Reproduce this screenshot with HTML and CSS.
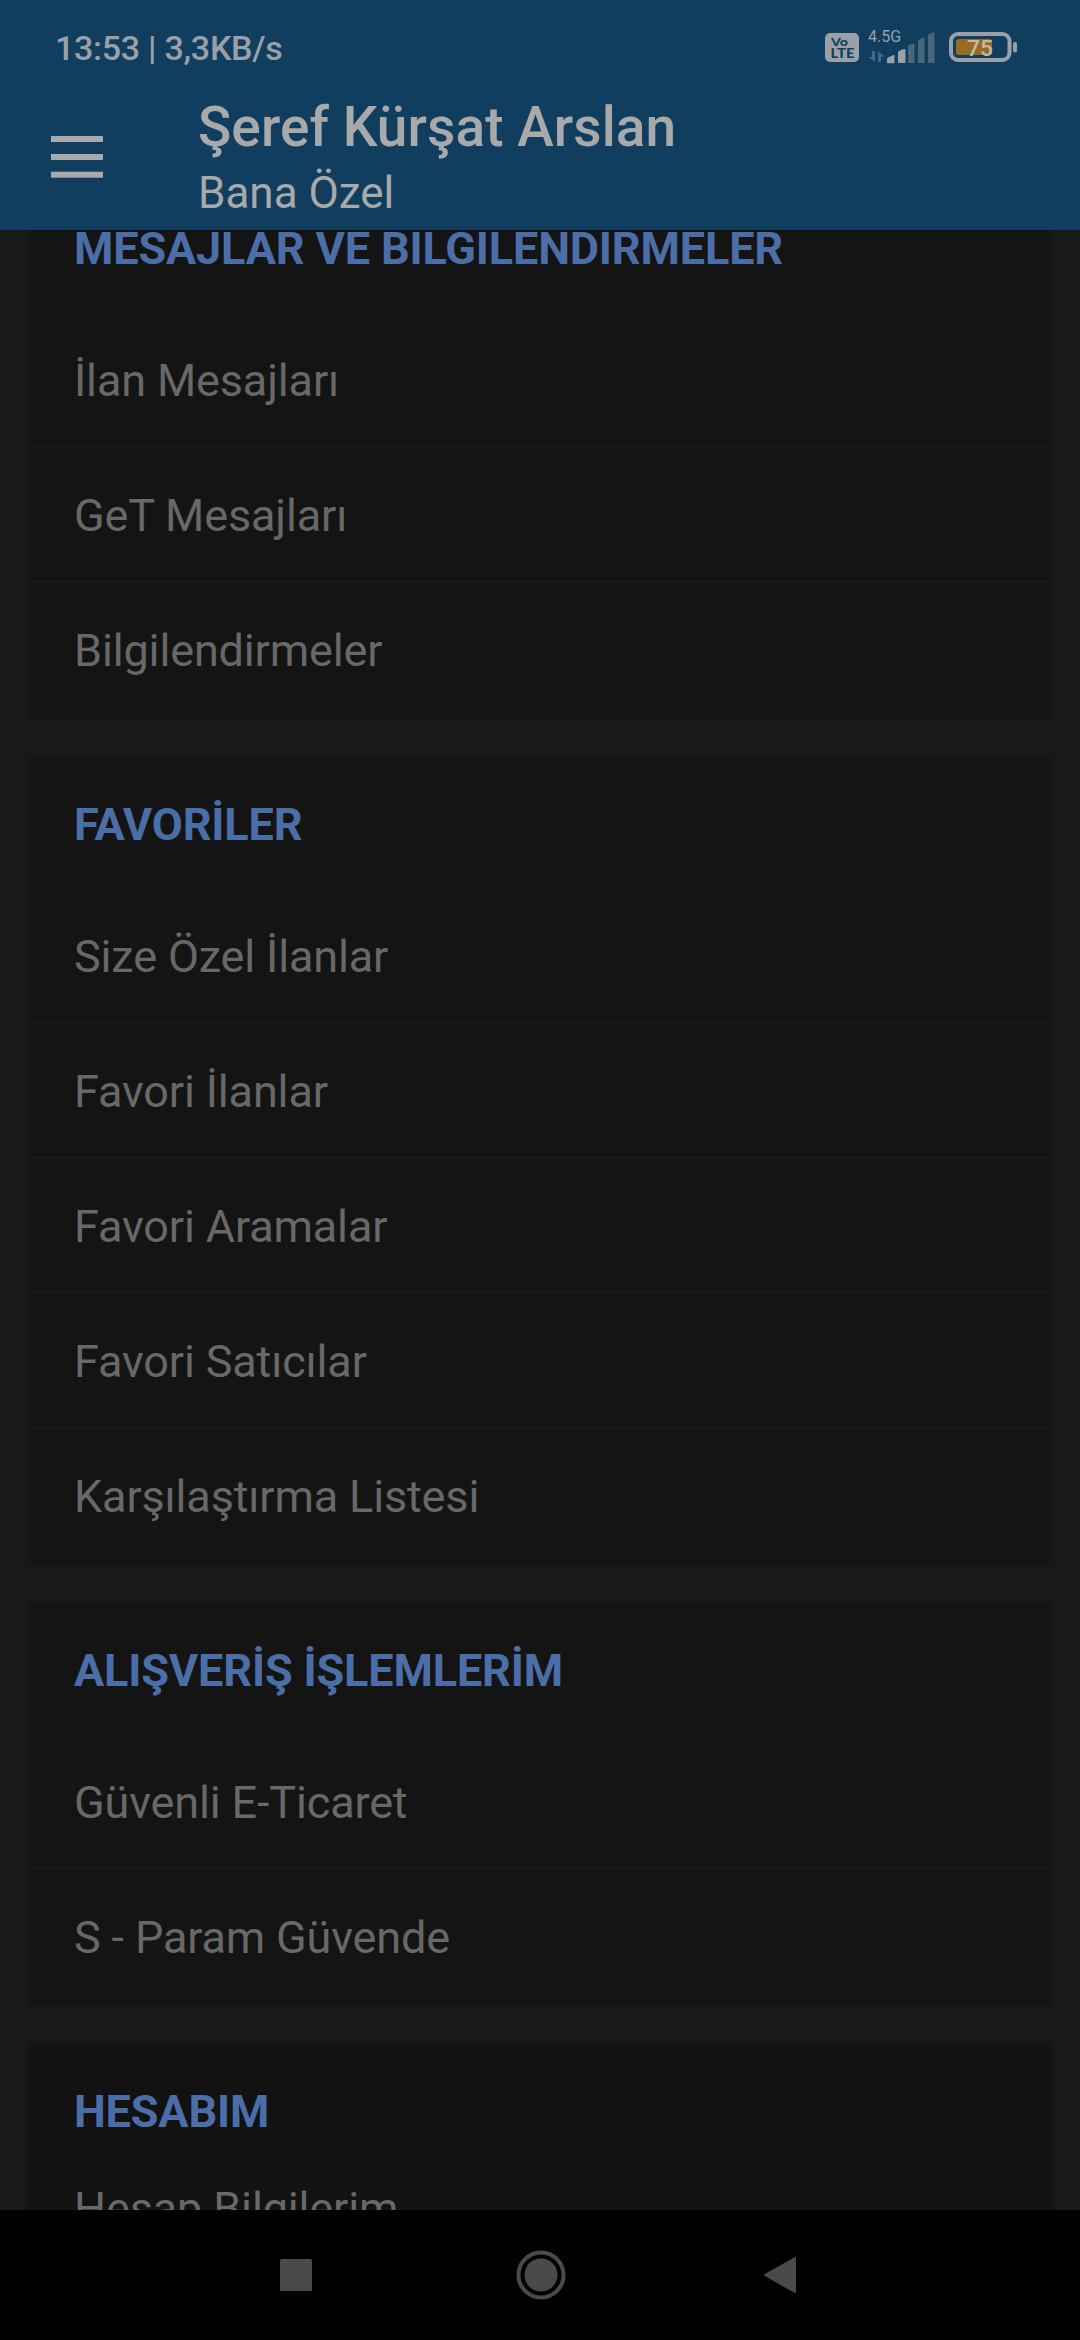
FILE: index.html
```html
<!DOCTYPE html>
<html lang="tr">
<head>
<meta charset="utf-8">
<title>Bana Özel</title>
<link rel="stylesheet" href="styles.css">
</head>
<body>
<div class="screen">
  <header class="header">
    <div class="status">
      <span class="clock">13:53 | 3,3KB/s</span>
      <svg class="status-icons" width="196" height="40" viewBox="824 28 196 40">
        <rect x="825" y="33" width="34" height="29" rx="5" fill="#9aa0a8"/>
        <text class="volte" x="831" y="45.7" font-size="11.5" textLength="17" lengthAdjust="spacingAndGlyphs">Vo</text>
        <text class="volte" x="830.5" y="58.3" font-size="13.5" textLength="24" lengthAdjust="spacingAndGlyphs">LTE</text>
        <text class="network" x="868" y="42" textLength="33" lengthAdjust="spacingAndGlyphs">4.5G</text>
        <path d="M872 51h3v11l-6.500-5h3.500zM878 62h3v-5.500h3.500L878 51z" fill="#48677f"/>
        <g fill="#9aa0a8">
          <path d="M887 63v-4q0-1 1-1.600l5.500-2.400h1v8q-4 .5-7.500 0z"/>
          <path d="M898 63V53q0-1.500 1-2l5-2q1.500 0 1.500 1v13z"/>
        </g>
        <g fill="#48677f">
          <path d="M908 63V47q0-1.500 1-2l4.500-1.500q1 0 1 1V63z"/>
          <path d="M918 63V42q0-2 1-2.500l4.500-1.800q1 0 1 1V63z"/>
          <path d="M928 63V36q0-1.500 1-2l4.500-1.700q1 0 1 1V63z"/>
        </g>
        <rect x="951" y="34" width="58.500" height="26" rx="7" fill="none" stroke="#9aa0a8" stroke-width="4"/>
        <rect x="956" y="39" width="36" height="16" rx="3" fill="#986c20"/>
        <rect x="1013" y="42" width="4" height="10.500" rx="2" fill="#9aa0a8"/>
        <text class="charge" x="967" y="55.500" textLength="26" lengthAdjust="spacingAndGlyphs">75</text>
      </svg>
    </div>
    <div class="toolbar">
      <svg class="menu" width="52" height="42" viewBox="0 0 52 42" fill="#a8a9aa">
        <rect width="52" height="6"/><rect y="18" width="52" height="6"/><rect y="35.700" width="52" height="6"/>
      </svg>
      <div class="titles">
        <h1 class="title">Şeref Kürşat Arslan</h1>
        <p class="subtitle">Bana Özel</p>
      </div>
    </div>
  </header>
  <main class="content">
    <section class="card first">
      <h2 class="heading">MESAJLAR VE BILGILENDIRMELER</h2>
      <div class="row">İlan Mesajları</div>
      <div class="row">GeT Mesajları</div>
      <div class="row">Bilgilendirmeler</div>
    </section>
    <section class="card">
      <h2 class="heading">FAVORİLER</h2>
      <div class="row">Size Özel İlanlar</div>
      <div class="row">Favori İlanlar</div>
      <div class="row">Favori Aramalar</div>
      <div class="row">Favori Satıcılar</div>
      <div class="row">Karşılaştırma Listesi</div>
    </section>
    <section class="card">
      <h2 class="heading">ALIŞVERİŞ İŞLEMLERİM</h2>
      <div class="row">Güvenli E-Ticaret</div>
      <div class="row">S - Param Güvende</div>
    </section>
    <section class="card account">
      <h2 class="heading">HESABIM</h2>
      <div class="row">Hesap Bilgilerim</div>
    </section>
  </main>
  <nav class="navbar">
    <svg width="32" height="32" viewBox="0 0 32 32"><rect width="32" height="32" rx="1.500" fill="#4a4a4a"/></svg>
    <svg class="home" width="50" height="50" viewBox="0 0 50 50"><circle cx="25" cy="25" r="22.500" fill="none" stroke="#4a4a4a" stroke-width="4"/><circle cx="25" cy="25" r="16.500" fill="#4a4a4a"/></svg>
    <svg width="32" height="38" viewBox="0 0 32 38"><path d="M1 19L31 2v34z" fill="#4a4a4a" stroke="#4a4a4a" stroke-width="2" stroke-linejoin="round"/></svg>
  </nav>
</div>
</body>
</html>
```

FILE: styles.css
```css
* { box-sizing: border-box; margin: 0; }
body { background: #191919; font-family: Roboto, sans-serif; }
.screen {
  width: 1080px;
  height: 2340px;
  display: flex;
  flex-direction: column;
  overflow: hidden;
}
.header { height: 230px; flex: none; background: #113e5e; color: #a8a9aa; }
.status {
  height: 95px;
  padding: 1px 60px 0 55px;
  display: flex;
  align-items: center;
  justify-content: space-between;
}
.clock { font-size: 34px; font-weight: 500; line-height: 40px; letter-spacing: -0.27px; color: #9aa0a8; }
.volte { font-family: Lato, sans-serif; font-weight: 900; fill: #113e5e; }
.network { font-size: 16px; fill: #9aa0a8; }
.charge { font-size: 22px; font-weight: 500; fill: #c2b9a6; }
.toolbar { display: flex; align-items: flex-start; padding-left: 51px; }
.menu { margin-top: 41px; flex: none; }
.titles { margin-left: 95px; white-space: nowrap; }
.title { font-size: 55px; font-weight: 500; line-height: 64px; letter-spacing: 0.07px; }
.subtitle { font-size: 44px; line-height: 52px; margin-top: 8px; }
.content {
  flex: 1;
  min-height: 0;
  overflow: hidden;
  padding: 0 29px;
  display: flex;
  flex-direction: column;
  gap: 38px;
}
.card {
  flex: none;
  background: #141414;
  border-radius: 6px;
  box-shadow: 0 1px 5px rgba(0, 0, 0, 0.18);
}
/* the list is scrolled by 50px */
.first { margin-top: -50px; }
.heading {
  height: 133px;
  padding: 42px 45px 0;
  font-size: 45px;
  font-weight: 700;
  line-height: 53px;
  letter-spacing: -0.15px;
  color: #4c6ea8;
  white-space: nowrap;
}
.row {
  height: 135px;
  padding: 2px 45px 0;
  border-bottom: 3px solid #181818;
  font-size: 45px;
  line-height: 132px;
  letter-spacing: -0.15px;
  color: #686868;
}
.row:last-child { border-bottom-color: transparent; }
.account { background: #121212; }
.account .heading { height: 98px; }
.navbar {
  height: 130px;
  flex: none;
  background: #000;
  display: flex;
  align-items: center;
  justify-content: space-between;
  padding: 0 284px 0 280px;
}
.home { margin-left: 5px; }
```
